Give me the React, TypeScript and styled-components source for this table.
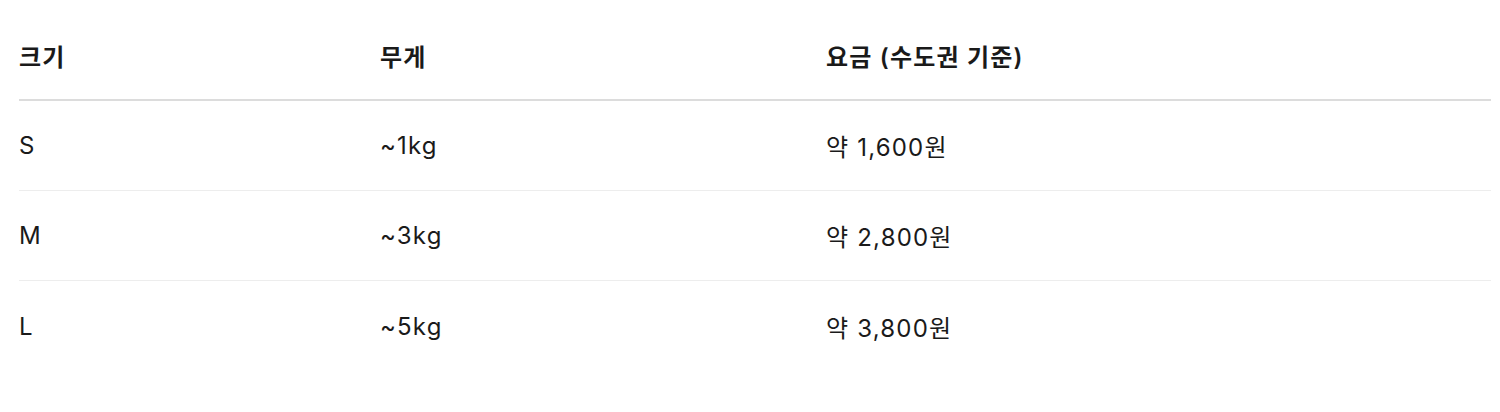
import styled, { createGlobalStyle } from "styled-components";

const GlobalStyle = createGlobalStyle`
  body {
    margin: 0;
    background: #ffffff;
    font-family: Inter, "Noto Sans CJK KR", sans-serif;
    color: #1a1a1a;
  }
`;

const Wrapper = styled.div`
  padding: 11px 9px 0 19px;
`;

const Table = styled.div`
  display: flex;
  flex-direction: column;
  width: 1472px;
`;

const Row = styled.div<{ $head?: boolean }>`
  display: grid;
  grid-template-columns: 361px 446px 1fr;
  align-items: center;
  height: 90px;
  border-bottom: ${(p) => (p.$head ? "2px solid #dcdcdc" : "1px solid #ededed")};
  box-sizing: border-box;
  font-size: 24px;
  font-weight: ${(p) => (p.$head ? 600 : 400)};
  letter-spacing: 1.2px;
  &:last-child {
    border-bottom: none;
  }
`;

const Cell = styled.div`
  white-space: nowrap;
`;

const rows = [
  ["S", "~1kg", "약 1,600원"],
  ["M", "~3kg", "약 2,800원"],
  ["L", "~5kg", "약 3,800원"],
];

function App() {
  return (
    <Wrapper>
      <GlobalStyle />
      <Table>
        <Row $head>
          <Cell>크기</Cell>
          <Cell>무게</Cell>
          <Cell>요금 (수도권 기준)</Cell>
        </Row>
        {rows.map((r) => (
          <Row key={r[0]}>
            {r.map((c, i) => (
              <Cell key={i}>{c}</Cell>
            ))}
          </Row>
        ))}
      </Table>
    </Wrapper>
  );
}

export default App;
